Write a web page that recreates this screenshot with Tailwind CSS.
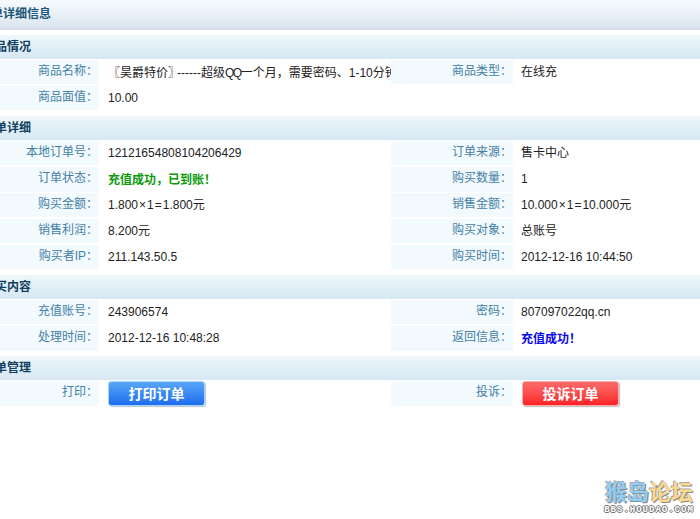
<!DOCTYPE html>
<html lang="zh-CN">
<head>
    <meta charset="UTF-8">
    <title>订单详细信息</title>
    <script src="https://cdn.jsdelivr.net/npm/@tailwindcss/browser@4"></script>
</head>
<body class="bg-white overflow-hidden text-xs text-[#222] font-['Liberation_Sans','Noto_Sans_CJK_SC',sans-serif]">
    <div class="relative w-[700px] h-[519px] overflow-hidden">
        <!-- Title -->
        <div class="h-[30px] border-b-2 border-[#d8dce9] bg-gradient-to-b from-[#f6fbfe] to-[#dbe5ef] leading-7 font-bold text-[#1d5578] -ml-[21px]">订单详细信息</div>

        <!-- 商品情况 -->
        <div class="mt-[5px] h-6 leading-6 font-bold text-[#123f5f] -ml-[17px] bg-gradient-to-b from-[#eef7fb] to-[#d6e8f3]">商品情况</div>
        <div class="mt-px grid grid-cols-[99px_292px_122px_1fr] h-6 leading-[23px]">
            <div class="bg-[#f3fafd] text-right text-[#4380a6] pr-px">商品名称：</div>
            <div class="pl-[9px] overflow-hidden whitespace-nowrap leading-6">〖昊爵特价<span class="tracking-[-3px]">〗</span>------超级<span class="tracking-[-1.5px]">QQ</span>一个月<span class="font-['Noto_Sans_CJK_TC']">，</span>需要密码、1-10分钟</div>
            <div class="bg-[#f3fafd] text-right text-[#4380a6] pr-px">商品类型：</div>
            <div class="pl-2 leading-6">在线充</div>
        </div>
        <div class="mt-0.5 grid grid-cols-[99px_292px_122px_1fr] h-6 leading-[23px]">
            <div class="bg-[#f3fafd] text-right text-[#4380a6] pr-px">商品面值：</div>
            <div class="pl-[9px] leading-6">10.00</div>
        </div>

        <!-- 订单详细 -->
        <div class="mt-1.5 h-6 leading-6 font-bold text-[#123f5f] -ml-[17px] bg-gradient-to-b from-[#eef7fb] to-[#d6e8f3]">订单详细</div>
        <div class="mt-px grid grid-cols-[99px_292px_122px_1fr] h-6 leading-[23px]">
            <div class="bg-[#f3fafd] text-right text-[#4380a6] pr-px">本地订单号：</div>
            <div class="pl-[9px] leading-6">12121654808104206429</div>
            <div class="bg-[#f3fafd] text-right text-[#4380a6] pr-px">订单来源：</div>
            <div class="pl-2 leading-6">售卡中心</div>
        </div>
        <div class="mt-0.5 grid grid-cols-[99px_292px_122px_1fr] h-6 leading-[23px]">
            <div class="bg-[#f3fafd] text-right text-[#4380a6] pr-px">订单状态：</div>
            <div class="pl-[9px] leading-6 font-bold text-[#0a9a0a]">充值成功<span class="font-['Noto_Sans_CJK_TC']">，</span>已到账<span class="font-['Noto_Sans_CJK_TC']">！</span></div>
            <div class="bg-[#f3fafd] text-right text-[#4380a6] pr-px">购买数量：</div>
            <div class="pl-2 leading-6">1</div>
        </div>
        <div class="mt-0.5 grid grid-cols-[99px_292px_122px_1fr] h-6 leading-[23px]">
            <div class="bg-[#f3fafd] text-right text-[#4380a6] pr-px">购买金额：</div>
            <div class="pl-[9px] leading-6">1.800<span class="mx-px">×</span>1<span class="mx-px">=</span>1.800元</div>
            <div class="bg-[#f3fafd] text-right text-[#4380a6] pr-px">销售金额：</div>
            <div class="pl-2 leading-6">10.000<span class="mx-px">×</span>1<span class="mx-px">=</span>10.000元</div>
        </div>
        <div class="mt-0.5 grid grid-cols-[99px_292px_122px_1fr] h-6 leading-[23px]">
            <div class="bg-[#f3fafd] text-right text-[#4380a6] pr-px">销售利润：</div>
            <div class="pl-[9px] leading-6">8.200元</div>
            <div class="bg-[#f3fafd] text-right text-[#4380a6] pr-px">购买对象：</div>
            <div class="pl-2 leading-6">总账号</div>
        </div>
        <div class="mt-0.5 grid grid-cols-[99px_292px_122px_1fr] h-6 leading-[23px]">
            <div class="bg-[#f3fafd] text-right text-[#4380a6] pr-px">购买者IP：</div>
            <div class="pl-[9px] leading-6">211.143.50.5</div>
            <div class="bg-[#f3fafd] text-right text-[#4380a6] pr-px">购买时间：</div>
            <div class="pl-2 leading-6">2012-12-16 10:44:50</div>
        </div>

        <!-- 购买内容 -->
        <div class="mt-1.5 h-6 leading-6 font-bold text-[#123f5f] -ml-[17px] bg-gradient-to-b from-[#eef7fb] to-[#d6e8f3]">购买内容</div>
        <div class="mt-px grid grid-cols-[99px_292px_122px_1fr] h-6 leading-[23px]">
            <div class="bg-[#f3fafd] text-right text-[#4380a6] pr-px">充值账号：</div>
            <div class="pl-[9px] leading-6">243906574</div>
            <div class="bg-[#f3fafd] text-right text-[#4380a6] pr-px">密码：</div>
            <div class="pl-2 leading-6">807097022qq.cn</div>
        </div>
        <div class="mt-0.5 grid grid-cols-[99px_292px_122px_1fr] h-6 leading-[23px]">
            <div class="bg-[#f3fafd] text-right text-[#4380a6] pr-px">处理时间：</div>
            <div class="pl-[9px] leading-6">2012-12-16 10:48:28</div>
            <div class="bg-[#f3fafd] text-right text-[#4380a6] pr-px">返回信息：</div>
            <div class="pl-2 leading-6 font-bold text-[#0808e8]">充值成功<span class="font-['Noto_Sans_CJK_TC']">！</span></div>
        </div>

        <!-- 订单管理 -->
        <div class="mt-1.5 h-6 leading-6 font-bold text-[#123f5f] -ml-[17px] bg-gradient-to-b from-[#eef7fb] to-[#d6e8f3]">订单管理</div>
        <div class="mt-px grid grid-cols-[99px_292px_122px_1fr] h-6 leading-[23px]">
            <div class="bg-[#f3fafd] text-right text-[#4380a6] pr-px">打印：</div>
            <div class="pl-[9px]">
                <button class="block w-[97px] h-[25px] rounded-[3px] border border-[#a8d4fb] bg-gradient-to-b from-[#5aa6f6] to-[#1c6cf0] text-white font-bold text-sm leading-[20px] shadow-[1px_1px_1px_#b8c4d4]">打印订单</button>
            </div>
            <div class="bg-[#f3fafd] text-right text-[#4380a6] pr-px">投诉：</div>
            <div class="pl-[9px]">
                <button class="block w-[97px] h-[25px] rounded-[3px] border border-[#fbb0b0] bg-gradient-to-b from-[#f96a6a] to-[#fb1c24] text-white font-bold text-sm leading-[20px] shadow-[1px_1px_1px_#c4b8b8]">投诉订单</button>
            </div>
        </div>

        <!-- Watermark -->
        <div class="absolute left-[603px] top-[480px] w-[92px]">
            <div class="flex justify-center font-bold text-[22px] leading-[25px] [text-shadow:1px_1px_0_#888,-1px_-1px_0_#aaa]">
                <span class="text-[#8fcdf5]">猴岛</span><span class="text-[#fbd98c]">论坛</span>
            </div>
            <div class="mt-px text-center font-['Liberation_Mono'] font-bold text-[9px] leading-[9px] tracking-[1px] text-white [text-shadow:1px_0_0_#777,-1px_0_0_#777,0_1px_0_#777,0_-1px_0_#777]">BBS.HOUDAO.COM</div>
        </div>
    </div>
</body>
</html>
